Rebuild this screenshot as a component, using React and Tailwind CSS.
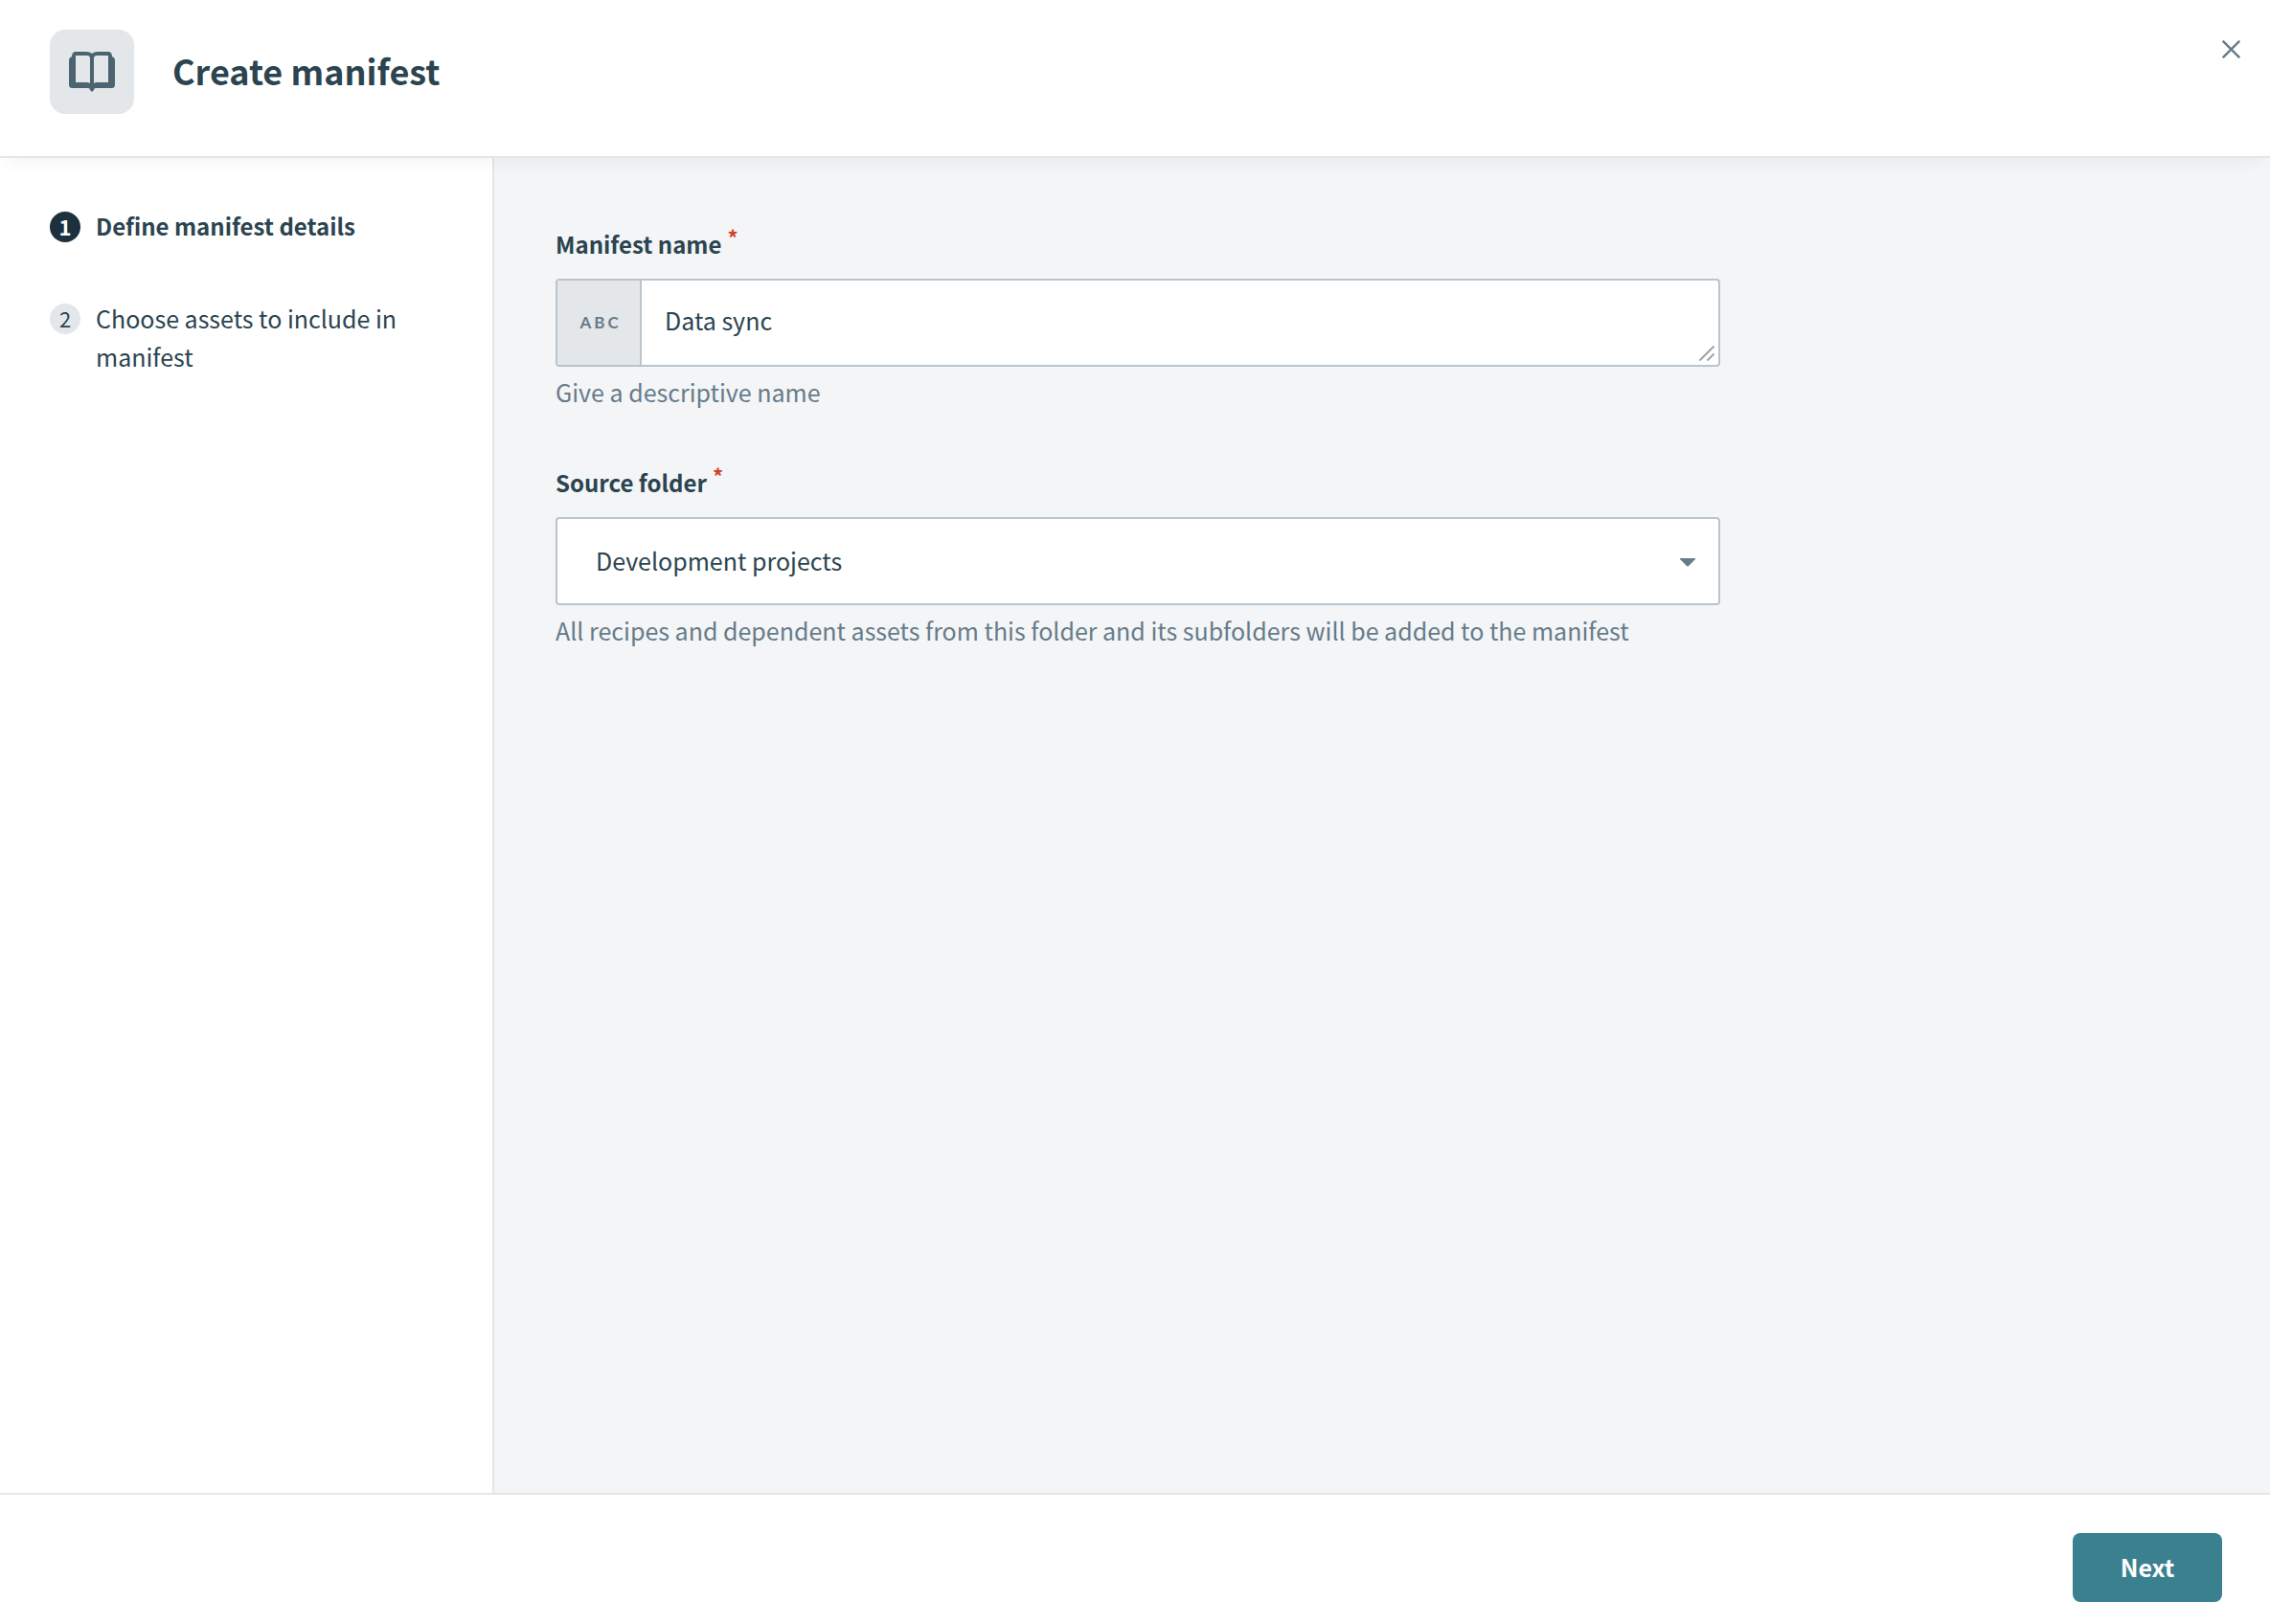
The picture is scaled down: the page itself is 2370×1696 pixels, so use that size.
import { useState } from 'react';

const steps = [
  { id: 1, title: 'Define manifest details' },
  { id: 2, title: 'Choose assets to include in manifest' },
];

const folders = ['Development projects', 'Home assets'];

const BookIcon = () => (
  <svg viewBox="0 0 48 42" className="w-12 h-[42px]" fill="#4c6370" aria-hidden="true">
    <path
      fillRule="evenodd"
      d="M6 0H18Q22 0 24 2Q26 0 30 0H42Q45 1 45 5Q48 6 48 9V34Q48 38 45 38H28Q26 38 26 40L24 42L22 40Q22 38 20 38H3Q0 38 0 34V9Q0 6 3 5Q3 1 6 0ZM7 4V32H18Q21 32 22 33V7Q22 4 19 4ZM41 4V32H30Q27 32 26 33V7Q26 4 29 4Z"
    />
  </svg>
);

const CloseIcon = () => (
  <svg viewBox="0 0 19 19" className="w-[19px] h-[19px]" fill="none" stroke="#677b89" strokeWidth="2.4" aria-hidden="true">
    <path d="M0.7 0.7L18.3 18.3M18.3 0.7L0.7 18.3" />
  </svg>
);

const FieldLabel = ({ htmlFor, children }) => (
  <label htmlFor={htmlFor} className="flex items-start gap-1.5 text-2xl leading-10 font-semibold">
    {children}
    <span className="text-[22px] leading-6 text-[#d1432b]">*</span>
  </label>
);

const App = () => {
  const [currentStep, setCurrentStep] = useState(1);
  const [name, setName] = useState('Data sync');
  const [folder, setFolder] = useState(folders[0]);

  return (
    <div className="flex flex-col min-h-screen bg-white text-[25px] leading-10 text-[#2b4450] font-['Noto_Sans_CJK_SC',sans-serif]">
      {/* Header */}
      <header className="relative z-10 flex items-start justify-between pt-[31px] pb-11 pl-[52px] pr-[31px] bg-white border-b-2 border-[#e3e7ea] shadow-[0_12px_16px_-8px_rgba(0,0,0,0.05)]">
        <div className="flex items-center gap-10">
          <div className="flex items-center justify-center w-[88px] h-[88px] rounded-2xl bg-[#e3e7ea]">
            <BookIcon />
          </div>
          <h1 className="pb-1 text-4xl font-bold">Create manifest</h1>
        </div>
        <button type="button" aria-label="Close" className="mt-[11px]">
          <CloseIcon />
        </button>
      </header>

      <div className="flex flex-1">
        {/* Steps */}
        <aside className="w-[516px] shrink-0 pt-[51px] pl-[52px] pr-20 border-r-2 border-[#e3e7ea]">
          <ol className="space-y-14">
            {steps.map((step) => {
              const active = step.id === currentStep;
              return (
                <li key={step.id} className={`flex items-start gap-4 ${active ? 'text-2xl leading-10 font-semibold' : ''}`}>
                  <span
                    className={`flex items-center justify-center w-8 h-8 pb-0.5 mt-[5px] shrink-0 rounded-full text-[22px] leading-8 ${
                      active ? 'bg-[#1c313d] text-white' : 'bg-[#e3e7ea]'
                    }`}
                  >
                    {step.id}
                  </span>
                  <span>{step.title}</span>
                </li>
              );
            })}
          </ol>
        </aside>

        {/* Form */}
        <main className="flex-1 pt-[70px] px-16 bg-[#f3f5f7]">
          <form className="max-w-[1216px] space-y-[55px]">
            <div>
              <FieldLabel htmlFor="manifest-name">Manifest name</FieldLabel>
              <div className="relative flex h-[92px] mt-4 bg-white border-2 border-[#b9c4cc] rounded">
                <span className="flex items-center justify-center w-[88px] shrink-0 pl-1 bg-[#e3e7ea] border-r-2 border-[#b9c4cc] font-['Lato',sans-serif] text-[17px] font-bold tracking-[3px] text-[#677b89]">
                  ABC
                </span>
                <textarea
                  id="manifest-name"
                  rows={1}
                  value={name}
                  onChange={(e) => setName(e.target.value)}
                  className="flex-1 px-6 py-[21px] resize-none outline-none overflow-hidden"
                />
                <svg viewBox="0 0 16 16" className="absolute right-1 bottom-1 w-4 h-4" stroke="#a3a3a3" strokeWidth="2" aria-hidden="true">
                  <path d="M0.5 15.5L15.5 0.5M8.5 15.5L15.5 8.5" />
                </svg>
              </div>
              <p className="mt-1.5 text-[#677b89]">Give a descriptive name</p>
            </div>

            <div>
              <FieldLabel htmlFor="source-folder">Source folder</FieldLabel>
              <div className="relative mt-4">
                <select
                  id="source-folder"
                  value={folder}
                  onChange={(e) => setFolder(e.target.value)}
                  className="block w-full h-[92px] px-10 pb-0.5 appearance-none bg-white border-2 border-[#b9c4cc] rounded outline-none"
                >
                  {folders.map((f) => (
                    <option key={f}>{f}</option>
                  ))}
                </select>
                <svg viewBox="0 0 16 9" className="absolute right-[26px] top-[43px] w-4 h-[9px] pointer-events-none" fill="#677b89" aria-hidden="true">
                  <path d="M0 0H16V1L9 8Q8 9 7 8L0 1Z" />
                </svg>
              </div>
              <p className="mt-1.5 text-[#677b89]">
                All recipes and dependent assets from this folder and its subfolders will be added to the manifest
              </p>
            </div>
          </form>
        </main>
      </div>

      {/* Footer */}
      <footer className="flex justify-end pt-10 pb-[23px] px-[50px] border-t-2 border-[#e3e7ea]">
        <button
          type="button"
          onClick={() => setCurrentStep(2)}
          className="w-[156px] h-[72px] pb-0.5 rounded-lg bg-[#3b808e] font-bold text-white"
        >
          Next
        </button>
      </footer>
    </div>
  );
};

export default App;
